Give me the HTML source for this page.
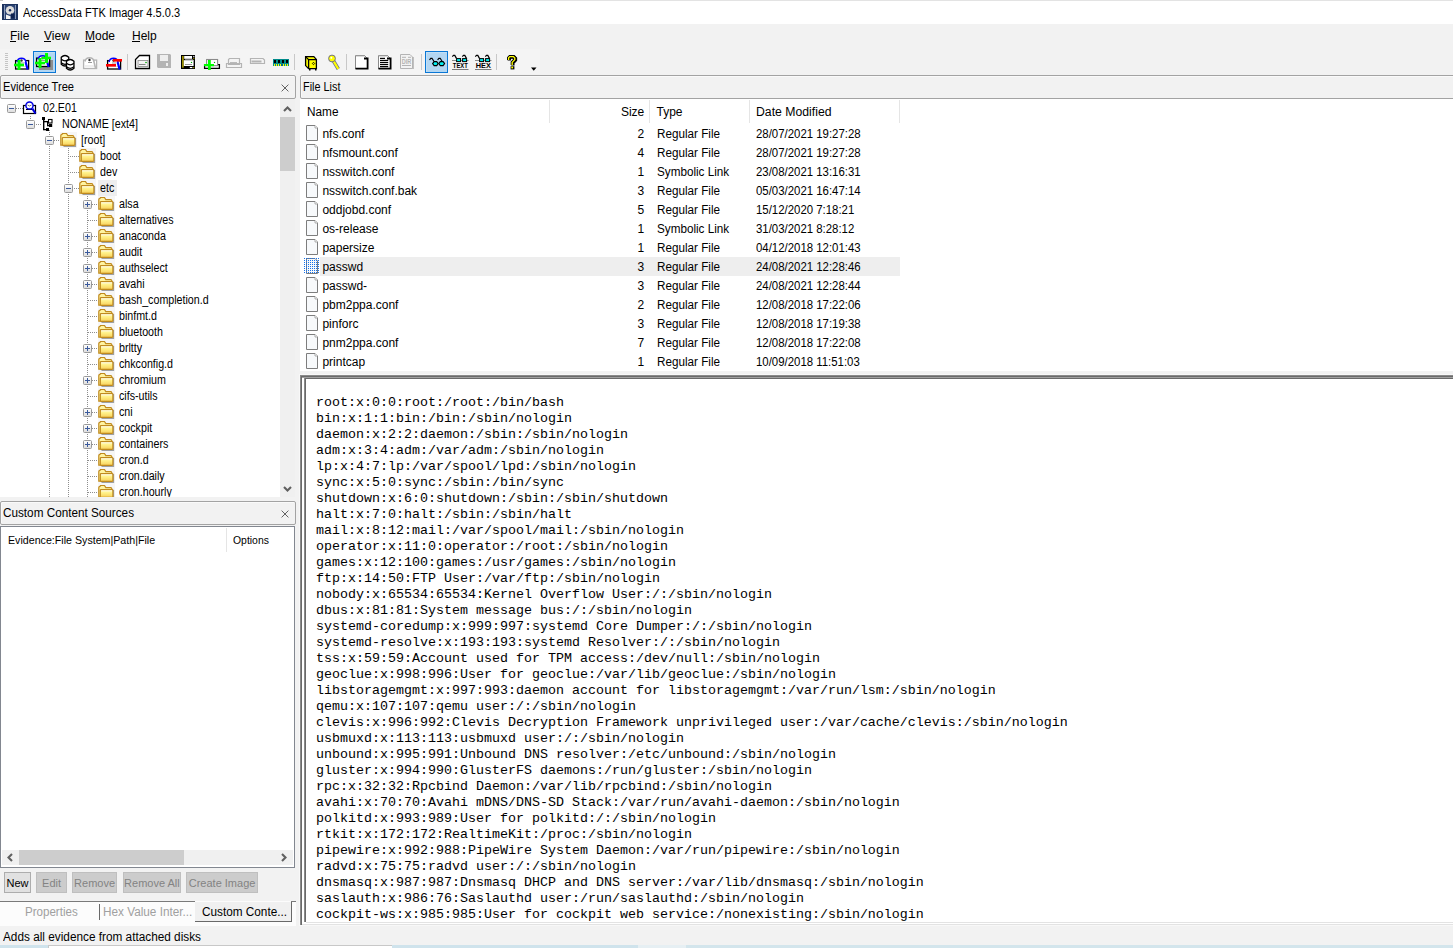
<!DOCTYPE html><html><head><meta charset="utf-8"><style>
*{box-sizing:border-box;margin:0;padding:0}
html,body{width:1453px;height:948px;overflow:hidden;background:#f2f2f2;font-family:"Liberation Sans",sans-serif;color:#000}
.a{position:absolute}
.t{position:absolute;white-space:pre;line-height:1}
svg{position:absolute;overflow:visible}
</style></head><body><div class="a" style="left:0;top:0;width:1453px;height:24px;background:#fff"></div>
<div class="a" style="left:60px;top:0;width:1393px;height:1px;background:#e3e3e3"></div>
<div class="a" style="left:0;top:0;width:3px;height:1px;background:#c8c8c8"></div>
<svg style="left:2px;top:4px" width="16" height="16" viewBox="0 0 16 16">
<rect x="0" y="0" width="16" height="16" fill="#1d335f"/>
<rect x="2" y="1" width="1" height="14" fill="#8a9bbb"/><rect x="13" y="1" width="1" height="14" fill="#8a9bbb"/>
<rect x="3" y="1" width="10" height="14" fill="#2a4272"/>
<circle cx="8" cy="6.3" r="4.3" fill="#dcdcdc"/>
<circle cx="8" cy="6.3" r="1.2" fill="#14285a"/>
<path d="M4 10.5 L8.5 12.2 L8.5 15 L4 15Z" fill="#f4f4f4"/>
<rect x="9" y="9.5" width="3.5" height="5" fill="#0f2250"/>
</svg>
<div class="t" style="left:23.00px;top:7px;font-size:12px;transform:scaleX(0.9201);transform-origin:0 0;">AccessData FTK Imager 4.5.0.3</div>
<div class="t" style="left:10px;top:30px;font-size:12px">File</div>
<div class="a" style="left:10px;top:41px;width:6px;height:1px;background:#000"></div>
<div class="t" style="left:44px;top:30px;font-size:12px">View</div>
<div class="a" style="left:44px;top:41px;width:7px;height:1px;background:#000"></div>
<div class="t" style="left:85px;top:30px;font-size:12px">Mode</div>
<div class="a" style="left:85px;top:41px;width:10px;height:1px;background:#000"></div>
<div class="t" style="left:132px;top:30px;font-size:12px">Help</div>
<div class="a" style="left:132px;top:41px;width:8px;height:1px;background:#000"></div>
<div class="a" style="left:0;top:49px;width:540px;height:25px;background:#f4f4f4"></div>
<div class="a" style="left:5px;top:53px;width:3px;height:1px;background:#c4c4c4"></div>
<div class="a" style="left:5px;top:55px;width:3px;height:1px;background:#c4c4c4"></div>
<div class="a" style="left:5px;top:57px;width:3px;height:1px;background:#c4c4c4"></div>
<div class="a" style="left:5px;top:59px;width:3px;height:1px;background:#c4c4c4"></div>
<div class="a" style="left:5px;top:61px;width:3px;height:1px;background:#c4c4c4"></div>
<div class="a" style="left:5px;top:63px;width:3px;height:1px;background:#c4c4c4"></div>
<div class="a" style="left:5px;top:65px;width:3px;height:1px;background:#c4c4c4"></div>
<div class="a" style="left:5px;top:67px;width:3px;height:1px;background:#c4c4c4"></div>
<div class="a" style="left:5px;top:69px;width:3px;height:1px;background:#c4c4c4"></div>
<div class="a" style="left:33px;top:51px;width:23px;height:22px;background:#b3d6f2;border:1px solid #0a77d5;box-shadow:inset 1px 1px 0 #c2dff5"></div>
<div class="a" style="left:425px;top:51px;width:23px;height:22px;background:#b3d6f2;border:1px solid #0a77d5;box-shadow:inset 1px 1px 0 #c2dff5"></div>
<div class="a" style="left:127px;top:54px;width:1px;height:16px;background:#c8c8c8"></div>
<div class="a" style="left:294px;top:54px;width:1px;height:16px;background:#c8c8c8"></div>
<div class="a" style="left:346px;top:54px;width:1px;height:16px;background:#c8c8c8"></div>
<div class="a" style="left:421px;top:54px;width:1px;height:16px;background:#c8c8c8"></div>
<div class="a" style="left:496px;top:54px;width:1px;height:16px;background:#c8c8c8"></div>
<svg style="left:0;top:0" width="545" height="80" viewBox="0 0 545 80"><rect x="15.6" y="60.6" width="13" height="8.4" fill="#fff" stroke="#000" stroke-width="1.3"/><rect x="17" y="66" width="10" height="1" fill="#e0e0e0"/><path d="M17 62 A4.6 4.6 0 0 1 26 62" fill="#fff" stroke="#0000ff" stroke-width="1.5"/><circle cx="21.5" cy="60.5" r="1.2" fill="#333"/><path d="M20 63 L24 63" stroke="#999" stroke-width="1"/><path d="M25.6 62 L27.6 69.5" stroke="#0000ff" stroke-width="2.2"/><rect x="14" y="63.7" width="10" height="2.6" fill="#00ff00"/><rect x="17.5" y="60" width="3" height="10" fill="#00ff00"/><rect x="39" y="60" width="14" height="10" fill="#8e8e8e"/><rect x="36.6" y="58.1" width="13" height="8.4" fill="#fff" stroke="#000" stroke-width="1.3"/><rect x="38" y="63.5" width="10" height="1" fill="#e0e0e0"/><path d="M38 59.5 A4.6 4.6 0 0 1 47 59.5" fill="#fff" stroke="#0000ff" stroke-width="1.5"/><circle cx="42.5" cy="58.0" r="1.2" fill="#333"/><path d="M41 60.5 L45 60.5" stroke="#999" stroke-width="1"/><path d="M46.6 59.5 L48.6 67.0" stroke="#0000ff" stroke-width="2.2"/><rect x="35" y="61.7" width="10" height="2.6" fill="#00ff00"/><rect x="38.5" y="58" width="3" height="10" fill="#00ff00"/><rect x="42" y="56.7" width="9" height="2.6" fill="#00ff00"/><rect x="45.0" y="53" width="3" height="10" fill="#00ff00"/><path d="M61.25 57.3 L61.25 64.2 Q65 67.8 68.75 64.2 L68.75 57.3 Q65 53.7 61.25 57.3Z" fill="#fff" stroke="#000" stroke-width="1.3"/><path d="M61.25 59.3 Q65 62.3 68.75 59.3" fill="none" stroke="#000" stroke-width="1.2"/><path d="M61.25 62.8 Q65 65.8 68.75 62.8" fill="none" stroke="#000" stroke-width="1.2"/><path d="M66.45 61.3 L66.45 68.2 Q70.2 71.8 73.95 68.2 L73.95 61.3 Q70.2 57.7 66.45 61.3Z" fill="#fff" stroke="#000" stroke-width="1.3"/><path d="M66.45 63.3 Q70.2 66.3 73.95 63.3" fill="none" stroke="#000" stroke-width="1.2"/><path d="M66.45 66.8 Q70.2 69.8 73.95 66.8" fill="none" stroke="#000" stroke-width="1.2"/><rect x="83.6" y="60.1" width="13" height="8.4" fill="#fff" stroke="#b4b4b4" stroke-width="1.3"/><rect x="85" y="65.5" width="10" height="1" fill="#e0e0e0"/><path d="M85 61.5 A4.6 4.6 0 0 1 94 61.5" fill="#fff" stroke="#b4b4b4" stroke-width="1.5"/><circle cx="89.5" cy="60.0" r="1.2" fill="#333"/><path d="M88 62.5 L92 62.5" stroke="#999" stroke-width="1"/><path d="M93.5 60 L95.5 68" stroke="#b4b4b4" stroke-width="1.6"/><rect x="107.6" y="60.6" width="13" height="8.4" fill="#fff" stroke="#000" stroke-width="1.3"/><rect x="109" y="66" width="10" height="1" fill="#e0e0e0"/><path d="M109 62 A4.6 4.6 0 0 1 118 62" fill="#fff" stroke="#0000ff" stroke-width="1.5"/><circle cx="113.5" cy="60.5" r="1.2" fill="#333"/><path d="M112 63 L116 63" stroke="#999" stroke-width="1"/><path d="M117.6 62 L119.6 69.5" stroke="#0000ff" stroke-width="2.2"/><rect x="113" y="59" width="9" height="2.6" fill="#ff0000"/><rect x="106" y="64" width="10" height="2.6" fill="#ff0000"/><path d="M139.5 55.5 L149.5 55.5 L149.5 68.5 L135.5 68.5 L135.5 59.5Z" fill="#fff" stroke="#000" stroke-width="1.3"/><rect x="138" y="60.5" width="10" height="6" fill="#f4f4f4" stroke="#888" stroke-width="0.8"/><rect x="139" y="64" width="6.5" height="0.9" fill="#777"/><circle cx="146" cy="62.5" r="0.8" fill="#0a0"/><path d="M157 54 L170 54 L171 55 L171 68 L158 68 L157 67Z" fill="#b4b4b4"/><rect x="160" y="55" width="8" height="6" fill="#eee"/><rect x="166" y="63" width="2" height="3" fill="#eee"/><rect x="181" y="55" width="14" height="14" fill="#000"/><rect x="182" y="56" width="1.8" height="11.7" fill="#9a8f00"/><rect x="184.2" y="56" width="7.8" height="2.8" fill="#fff"/><rect x="185" y="59.2" width="8" height="0.8" fill="#8a8a8a"/><rect x="193.2" y="56.1" width="1.2" height="1.2" fill="#fff"/><rect x="193.2" y="58" width="1.2" height="1.2" fill="#9a8f00"/><rect x="183.8" y="60.2" width="10" height="5.8" fill="#fff"/><rect x="193" y="60.5" width="1" height="5.5" fill="#9a9a9a"/><rect x="185" y="64" width="7" height="0.9" fill="#8a8a8a"/><circle cx="191.5" cy="62.4" r="0.7" fill="#0a0"/><rect x="189.8" y="67" width="2.6" height="1.1" fill="#fff"/><rect x="193.1" y="67" width="1.2" height="1.2" fill="#9a8f00"/><path d="M204.6 64.6 H219.4 V68.4 H204.6Z" fill="#fff" stroke="#000" stroke-width="1.3"/><rect x="206.6" y="59.5" width="11" height="6.2" fill="#fff" stroke="#8a8a8a" stroke-width="1.1"/><circle cx="214.5" cy="62.4" r="0.7" fill="#0a0"/><rect x="204" y="64" width="10" height="2.2" fill="#00ff00"/><rect x="208" y="60" width="2.8" height="10" fill="#00ff00"/><path d="M229.5 58.5 L239.5 58.5 L239.5 64.5 L228.5 64.5 L228.5 59.5Z" fill="none" stroke="#b4b4b4" stroke-width="1.2"/><path d="M226.5 63.5 L241.5 63.5 L241.5 67.5 L226.5 67.5Z" fill="none" stroke="#b4b4b4" stroke-width="1.2"/><rect x="230" y="62" width="7" height="0.9" fill="#b4b4b4"/><path d="M250.5 58.5 L263 58.5 L264.5 60 L264.5 63.5 L250.5 63.5Z" fill="none" stroke="#b4b4b4" stroke-width="1.2"/><rect x="251.5" y="60.5" width="10" height="2" fill="#b4b4b4"/><rect x="273" y="59" width="16" height="7" fill="#008a8a"/><rect x="274" y="60" width="2" height="3" fill="#000"/><rect x="278" y="60" width="2" height="3" fill="#000"/><rect x="282" y="60" width="2" height="3" fill="#000"/><rect x="286" y="60" width="2" height="3" fill="#000"/><rect x="274" y="64" width="1" height="2" fill="#ffff00"/><rect x="276" y="64" width="1" height="2" fill="#ffff00"/><rect x="278" y="64" width="1" height="2" fill="#ffff00"/><rect x="280" y="64" width="1" height="2" fill="#ffff00"/><rect x="283" y="64" width="1" height="2" fill="#ffff00"/><rect x="285" y="64" width="1" height="2" fill="#ffff00"/><rect x="287" y="64" width="1" height="2" fill="#ffff00"/><rect x="281" y="64" width="2" height="2" fill="#006a8a"/><path d="M305.6 56.6 H313.8 L316.4 59.4 V68.6 H308.6 L305.6 65.6Z" fill="#ffff00" stroke="#000" stroke-width="1.3"/><path d="M305.6 56.6 L308.6 59.6 H316.4 M308.6 59.6 V68.6" fill="none" stroke="#000" stroke-width="1.3"/><rect x="309" y="69" width="1.5" height="1.5" fill="#000"/><rect x="315" y="69" width="1.5" height="1.5" fill="#000"/><path d="M313.5 62.3 L314.7 63.5 L313.5 64.7 L312.3 63.5Z" fill="none" stroke="#000" stroke-width="0.9"/><path d="M333.5 61 L338.3 69" stroke="#6f6f8a" stroke-width="3.6"/><path d="M333.5 61 L338.3 69" stroke="#ffff00" stroke-width="2.2"/><circle cx="332" cy="58.5" r="3.4" fill="#ffff00" stroke="#6f6f8a" stroke-width="1"/><circle cx="331.3" cy="57.8" r="1" fill="#fff"/><path d="M355.5 69 V55.8 H364.8 L367.5 58.5" fill="#fff" stroke="#8a8a8a" stroke-width="1"/><rect x="355.5" y="55.8" width="12" height="13" fill="#fff"/><path d="M355.5 69 V55.8 H364.8 L367.5 58.5" fill="none" stroke="#8a8a8a" stroke-width="1"/><path d="M364 58.5 H367.6 V68.6 H355.5" fill="none" stroke="#000" stroke-width="1.8"/><path d="M378.5 69 V55.8 H387.8 L390.5 58.5" fill="#fff" stroke="#8a8a8a" stroke-width="1"/><rect x="378.5" y="55.8" width="12" height="13" fill="#fff"/><path d="M378.5 69 V55.8 H387.8 L390.5 58.5" fill="none" stroke="#8a8a8a" stroke-width="1"/><path d="M387 58.5 H390.6 V68.6 H378.5" fill="none" stroke="#000" stroke-width="1.8"/><rect x="380" y="57.8" width="5" height="1.2" fill="#000"/><rect x="380" y="59.849999999999994" width="8.2" height="1.2" fill="#000"/><rect x="380" y="61.9" width="8.2" height="1.2" fill="#000"/><rect x="380" y="63.949999999999996" width="8.2" height="1.2" fill="#000"/><rect x="380" y="66.0" width="8.2" height="1.2" fill="#000"/><path d="M400.5 68.5 V54.5 H410 L412.5 57 V68.5Z" fill="#f3f3f3" stroke="#b4b4b4" stroke-width="1"/><rect x="412.5" y="57" width="1.3" height="12" fill="#b4b4b4"/><rect x="402" y="56.8" width="4" height="1" fill="#b4b4b4"/><rect x="408" y="56.8" width="3" height="1" fill="#b4b4b4"/><rect x="402" y="65" width="9" height="1" fill="#b4b4b4"/><text x="401.8" y="63.8" font-family="Liberation Sans" font-size="6.3" font-weight="bold" textLength="9.6" lengthAdjust="spacingAndGlyphs" fill="#b4b4b4">DIR</text><path d="M429.5 59.8 L430.8 58.3 H432 L434 61.5 M437.6 59.8 L438.9 58.3 H440.2 L442.2 61.5" fill="none" stroke="#000" stroke-width="1.2"/><path d="M432.6 63.599999999999994 L434.1 61.6 H436.7 L438.2 63.599999999999994 L436.7 65.6 H434.1Z" fill="#00f0f0" stroke="#000" stroke-width="1.1"/><path d="M438.8 63.599999999999994 L440.3 61.6 H443.1 L444.6 63.599999999999994 L443.1 65.6 H440.3Z" fill="#00f0f0" stroke="#000" stroke-width="1.1"/><path d="M452.3 56.6 L453.5 55.4 H454.8 L456.6 58.6 M462.3 56.6 L463.5 55.4 H464.8 L466.6 58.6" fill="none" stroke="#000" stroke-width="1.2"/><rect x="452" y="60" width="16.5" height="1" fill="#8a8a8a"/><rect x="456.6" y="58.6" width="4" height="3" fill="#00f0f0" stroke="#000" stroke-width="1"/><rect x="462.6" y="58.6" width="4" height="3" fill="#00f0f0" stroke="#000" stroke-width="1"/><text x="452.8" y="67.9" font-family="Liberation Sans" font-size="6.4" font-weight="bold" textLength="15" lengthAdjust="spacingAndGlyphs" fill="#000">TEXT</text><rect x="452" y="69" width="16.5" height="1" fill="#7a7a7a"/><path d="M475.3 56.6 L476.5 55.4 H477.8 L479.6 58.6 M485.3 56.6 L486.5 55.4 H487.8 L489.6 58.6" fill="none" stroke="#000" stroke-width="1.2"/><rect x="475" y="60" width="16.5" height="1" fill="#8a8a8a"/><rect x="479.6" y="58.6" width="4" height="3" fill="#00f0f0" stroke="#000" stroke-width="1"/><rect x="485.6" y="58.6" width="4" height="3" fill="#00f0f0" stroke="#000" stroke-width="1"/><text x="475.8" y="67.9" font-family="Liberation Sans" font-size="6.4" font-weight="bold" textLength="15" lengthAdjust="spacingAndGlyphs" fill="#000">HEX</text><rect x="475" y="69" width="16.5" height="1" fill="#7a7a7a"/><path d="M508.6 60 V57.8 L509.8 56.6 H513.4 L514.8 58 V59.6 L512.2 62.4 V65" transform="translate(0.7,0.4)" fill="none" stroke="#000" stroke-width="3.3"/><path d="M508.6 60 V57.8 L509.8 56.6 H513.4 L514.8 58 V59.6 L512.2 62.4 V65" fill="none" stroke="#000" stroke-width="3.1"/><path d="M508.6 60 V57.8 L509.8 56.6 H513.4 L514.8 58 V59.6 L512.2 62.4 V65" fill="none" stroke="#ffff00" stroke-width="1.3"/><rect x="510.6" y="66.2" width="3.8" height="3.2" fill="#000"/><rect x="511.3" y="66.6" width="1.8" height="1.8" fill="#ffff00"/><path d="M531 67.5 L536.5 67.5 L533.75 70.8Z" fill="#000"/></svg>
<div class="a" style="left:0px;top:75px;width:296px;height:24px;background:#f2f2f2;border:1px solid #a3a3a3;border-radius:2px;box-shadow:inset 1px 1px 0 #fafafa"></div>
<div class="t" style="left:2.50px;top:81px;font-size:12px;transform:scaleX(0.9255);transform-origin:0 0;">Evidence Tree</div>
<svg style="left:281px;top:84px" width="8" height="8" viewBox="0 0 8 8"><path d="M0.6 0.6 L7.4 7.4 M7.4 0.6 L0.6 7.4" stroke="#5a5a5a" stroke-width="0.95"/></svg>
<div class="a" style="left:0px;top:99px;width:280px;height:398px;background:#fff"></div>
<div class="a" style="left:280px;top:99px;width:15px;height:398px;background:#f0f0f0"></div>
<div class="a" style="left:280px;top:117px;width:15px;height:54px;background:#cdcdcd"></div>
<svg style="left:283px;top:106px" width="9" height="6" viewBox="0 0 9 6"><path d="M1 5 L4.5 1.5 L8 5" fill="none" stroke="#606060" stroke-width="2.1"/></svg>
<svg style="left:283px;top:486px" width="9" height="6" viewBox="0 0 9 6"><path d="M1 1 L4.5 4.5 L8 1" fill="none" stroke="#606060" stroke-width="2.1"/></svg>
<svg style="left:0;top:0" width="300" height="500" viewBox="0 0 300 500"><defs><linearGradient id="fg" x1="0" y1="0" x2="0" y2="1"><stop offset="0" stop-color="#fffad0"/><stop offset="0.4" stop-color="#fff28a"/><stop offset="1" stop-color="#f8cf5a"/></linearGradient><linearGradient id="eg" x1="0" y1="0" x2="0" y2="1"><stop offset="0" stop-color="#fff"/><stop offset="1" stop-color="#dcdcdc"/></linearGradient><clipPath id="tc"><rect x="0" y="99" width="280" height="398"/></clipPath></defs><g clip-path="url(#tc)"><pattern id="pv" width="1" height="2" patternUnits="userSpaceOnUse"><rect width="1" height="1" fill="#8e8e8e"/></pattern><pattern id="ph" width="2" height="1" patternUnits="userSpaceOnUse"><rect width="1" height="1" fill="#8e8e8e"/></pattern><rect x="30" y="115" width="1" height="5" fill="url(#pv)"/><rect x="49" y="130" width="1" height="370" fill="url(#pv)"/><rect x="68" y="148" width="1" height="352" fill="url(#pv)"/><rect x="87" y="196" width="1" height="304" fill="url(#pv)"/><rect x="16" y="108" width="7" height="1" fill="url(#ph)"/><rect x="7.5" y="104.5" width="8" height="8" rx="1" fill="url(#eg)" stroke="#999" stroke-width="1"/><rect x="9" y="108" width="5" height="1" fill="#3b5a9c"/><rect x="23.5" y="105.5" width="12" height="8" fill="#fff" stroke="#000" stroke-width="1.2"/><path d="M26 109.5 L33 109.5" stroke="#000" stroke-width="1"/><circle cx="29.5" cy="105.5" r="3.6" fill="#fff" stroke="#0000e0" stroke-width="1.5"/><path d="M27.5 105 Q29.5 107 31.5 105" fill="none" stroke="#555" stroke-width="0.8"/><path d="M32.3 108.5 L35.5 113.5" stroke="#0000e0" stroke-width="2.2"/><rect x="35" y="124" width="6" height="1" fill="url(#ph)"/><rect x="26.5" y="120.5" width="8" height="8" rx="1" fill="url(#eg)" stroke="#999" stroke-width="1"/><rect x="28" y="124" width="5" height="1" fill="#3b5a9c"/><rect x="42" y="117" width="3" height="3" fill="#000"/><rect x="43" y="119" width="1.4" height="11" fill="#000"/><rect x="43" y="121" width="5" height="1.3" fill="#000"/><rect x="47" y="121" width="1.3" height="5" fill="#000"/><rect x="47" y="125" width="2.5" height="1.3" fill="#000"/><rect x="48.5" y="119.5" width="3.5" height="3.5" fill="#fff" stroke="#000" stroke-width="1.1"/><rect x="49" y="124" width="3.2" height="3" fill="#000"/><rect x="43" y="129" width="3" height="1.3" fill="#000"/><rect x="46" y="128" width="3" height="3" fill="#000"/><rect x="54" y="140" width="6" height="1" fill="url(#ph)"/><rect x="45.5" y="136.5" width="8" height="8" rx="1" fill="url(#eg)" stroke="#999" stroke-width="1"/><rect x="47" y="140" width="5" height="1" fill="#3b5a9c"/><rect x="60" y="132" width="17" height="16" fill="#f6f6f6"/><path d="M63.5 146.5 H75.5 V138" fill="none" stroke="#55595f" stroke-opacity="0.55" stroke-width="1.2"/><path d="M60.8 145.2 V135.6 Q60.8 134.4 62 134.4 L62.5 133.5 H66.5 L67.8 135.6 H72.6 Q73.8 135.6 73.8 136.8 V145.2Z" fill="#fff3a0" stroke="#c08a1e" stroke-width="1.2"/><rect x="62.3" y="137.6" width="12.6" height="7.8" rx="0.8" fill="url(#fg)" stroke="#c08a1e" stroke-width="1.2"/><path d="M63.2 138.8 H74" stroke="#fffbe6" stroke-width="0.9"/><rect x="69" y="156" width="10" height="1" fill="url(#ph)"/><rect x="79" y="148" width="17" height="16" fill="#f6f6f6"/><path d="M82.5 162.5 H94.5 V154" fill="none" stroke="#55595f" stroke-opacity="0.55" stroke-width="1.2"/><path d="M79.8 161.2 V151.6 Q79.8 150.4 81 150.4 L81.5 149.5 H85.5 L86.8 151.6 H91.6 Q92.8 151.6 92.8 152.8 V161.2Z" fill="#fff3a0" stroke="#c08a1e" stroke-width="1.2"/><rect x="81.3" y="153.6" width="12.6" height="7.8" rx="0.8" fill="url(#fg)" stroke="#c08a1e" stroke-width="1.2"/><path d="M82.2 154.8 H93" stroke="#fffbe6" stroke-width="0.9"/><rect x="69" y="172" width="10" height="1" fill="url(#ph)"/><rect x="79" y="164" width="17" height="16" fill="#f6f6f6"/><path d="M82.5 178.5 H94.5 V170" fill="none" stroke="#55595f" stroke-opacity="0.55" stroke-width="1.2"/><path d="M79.8 177.2 V167.6 Q79.8 166.4 81 166.4 L81.5 165.5 H85.5 L86.8 167.6 H91.6 Q92.8 167.6 92.8 168.8 V177.2Z" fill="#fff3a0" stroke="#c08a1e" stroke-width="1.2"/><rect x="81.3" y="169.6" width="12.6" height="7.8" rx="0.8" fill="url(#fg)" stroke="#c08a1e" stroke-width="1.2"/><path d="M82.2 170.8 H93" stroke="#fffbe6" stroke-width="0.9"/><rect x="73" y="188" width="6" height="1" fill="url(#ph)"/><rect x="64.5" y="184.5" width="8" height="8" rx="1" fill="url(#eg)" stroke="#999" stroke-width="1"/><rect x="66" y="188" width="5" height="1" fill="#3b5a9c"/><rect x="79" y="180" width="17" height="16" fill="#f6f6f6"/><path d="M82.5 194.5 H94.5 V186" fill="none" stroke="#55595f" stroke-opacity="0.55" stroke-width="1.2"/><path d="M79.8 193.2 V183.6 Q79.8 182.4 81 182.4 L81.5 181.5 H85.5 L86.8 183.6 H91.6 Q92.8 183.6 92.8 184.8 V193.2Z" fill="#fff3a0" stroke="#c08a1e" stroke-width="1.2"/><rect x="81.3" y="185.6" width="12.6" height="7.8" rx="0.8" fill="url(#fg)" stroke="#c08a1e" stroke-width="1.2"/><path d="M82.2 186.8 H93" stroke="#fffbe6" stroke-width="0.9"/><rect x="92" y="204" width="6" height="1" fill="url(#ph)"/><rect x="83.5" y="200.5" width="8" height="8" rx="1" fill="url(#eg)" stroke="#999" stroke-width="1"/><rect x="85" y="204" width="5" height="1" fill="#3b5a9c"/><rect x="87" y="202" width="1" height="5" fill="#3b5a9c"/><rect x="98" y="196" width="17" height="16" fill="#f6f6f6"/><path d="M101.5 210.5 H113.5 V202" fill="none" stroke="#55595f" stroke-opacity="0.55" stroke-width="1.2"/><path d="M98.8 209.2 V199.6 Q98.8 198.4 100 198.4 L100.5 197.5 H104.5 L105.8 199.6 H110.6 Q111.8 199.6 111.8 200.8 V209.2Z" fill="#fff3a0" stroke="#c08a1e" stroke-width="1.2"/><rect x="100.3" y="201.6" width="12.6" height="7.8" rx="0.8" fill="url(#fg)" stroke="#c08a1e" stroke-width="1.2"/><path d="M101.2 202.8 H112" stroke="#fffbe6" stroke-width="0.9"/><rect x="88" y="220" width="10" height="1" fill="url(#ph)"/><rect x="98" y="212" width="17" height="16" fill="#f6f6f6"/><path d="M101.5 226.5 H113.5 V218" fill="none" stroke="#55595f" stroke-opacity="0.55" stroke-width="1.2"/><path d="M98.8 225.2 V215.6 Q98.8 214.4 100 214.4 L100.5 213.5 H104.5 L105.8 215.6 H110.6 Q111.8 215.6 111.8 216.8 V225.2Z" fill="#fff3a0" stroke="#c08a1e" stroke-width="1.2"/><rect x="100.3" y="217.6" width="12.6" height="7.8" rx="0.8" fill="url(#fg)" stroke="#c08a1e" stroke-width="1.2"/><path d="M101.2 218.8 H112" stroke="#fffbe6" stroke-width="0.9"/><rect x="92" y="236" width="6" height="1" fill="url(#ph)"/><rect x="83.5" y="232.5" width="8" height="8" rx="1" fill="url(#eg)" stroke="#999" stroke-width="1"/><rect x="85" y="236" width="5" height="1" fill="#3b5a9c"/><rect x="87" y="234" width="1" height="5" fill="#3b5a9c"/><rect x="98" y="228" width="17" height="16" fill="#f6f6f6"/><path d="M101.5 242.5 H113.5 V234" fill="none" stroke="#55595f" stroke-opacity="0.55" stroke-width="1.2"/><path d="M98.8 241.2 V231.6 Q98.8 230.4 100 230.4 L100.5 229.5 H104.5 L105.8 231.6 H110.6 Q111.8 231.6 111.8 232.8 V241.2Z" fill="#fff3a0" stroke="#c08a1e" stroke-width="1.2"/><rect x="100.3" y="233.6" width="12.6" height="7.8" rx="0.8" fill="url(#fg)" stroke="#c08a1e" stroke-width="1.2"/><path d="M101.2 234.8 H112" stroke="#fffbe6" stroke-width="0.9"/><rect x="92" y="252" width="6" height="1" fill="url(#ph)"/><rect x="83.5" y="248.5" width="8" height="8" rx="1" fill="url(#eg)" stroke="#999" stroke-width="1"/><rect x="85" y="252" width="5" height="1" fill="#3b5a9c"/><rect x="87" y="250" width="1" height="5" fill="#3b5a9c"/><rect x="98" y="244" width="17" height="16" fill="#f6f6f6"/><path d="M101.5 258.5 H113.5 V250" fill="none" stroke="#55595f" stroke-opacity="0.55" stroke-width="1.2"/><path d="M98.8 257.2 V247.6 Q98.8 246.4 100 246.4 L100.5 245.5 H104.5 L105.8 247.6 H110.6 Q111.8 247.6 111.8 248.8 V257.2Z" fill="#fff3a0" stroke="#c08a1e" stroke-width="1.2"/><rect x="100.3" y="249.6" width="12.6" height="7.8" rx="0.8" fill="url(#fg)" stroke="#c08a1e" stroke-width="1.2"/><path d="M101.2 250.8 H112" stroke="#fffbe6" stroke-width="0.9"/><rect x="92" y="268" width="6" height="1" fill="url(#ph)"/><rect x="83.5" y="264.5" width="8" height="8" rx="1" fill="url(#eg)" stroke="#999" stroke-width="1"/><rect x="85" y="268" width="5" height="1" fill="#3b5a9c"/><rect x="87" y="266" width="1" height="5" fill="#3b5a9c"/><rect x="98" y="260" width="17" height="16" fill="#f6f6f6"/><path d="M101.5 274.5 H113.5 V266" fill="none" stroke="#55595f" stroke-opacity="0.55" stroke-width="1.2"/><path d="M98.8 273.2 V263.6 Q98.8 262.4 100 262.4 L100.5 261.5 H104.5 L105.8 263.6 H110.6 Q111.8 263.6 111.8 264.8 V273.2Z" fill="#fff3a0" stroke="#c08a1e" stroke-width="1.2"/><rect x="100.3" y="265.6" width="12.6" height="7.8" rx="0.8" fill="url(#fg)" stroke="#c08a1e" stroke-width="1.2"/><path d="M101.2 266.8 H112" stroke="#fffbe6" stroke-width="0.9"/><rect x="92" y="284" width="6" height="1" fill="url(#ph)"/><rect x="83.5" y="280.5" width="8" height="8" rx="1" fill="url(#eg)" stroke="#999" stroke-width="1"/><rect x="85" y="284" width="5" height="1" fill="#3b5a9c"/><rect x="87" y="282" width="1" height="5" fill="#3b5a9c"/><rect x="98" y="276" width="17" height="16" fill="#f6f6f6"/><path d="M101.5 290.5 H113.5 V282" fill="none" stroke="#55595f" stroke-opacity="0.55" stroke-width="1.2"/><path d="M98.8 289.2 V279.6 Q98.8 278.4 100 278.4 L100.5 277.5 H104.5 L105.8 279.6 H110.6 Q111.8 279.6 111.8 280.8 V289.2Z" fill="#fff3a0" stroke="#c08a1e" stroke-width="1.2"/><rect x="100.3" y="281.6" width="12.6" height="7.8" rx="0.8" fill="url(#fg)" stroke="#c08a1e" stroke-width="1.2"/><path d="M101.2 282.8 H112" stroke="#fffbe6" stroke-width="0.9"/><rect x="88" y="300" width="10" height="1" fill="url(#ph)"/><rect x="98" y="292" width="17" height="16" fill="#f6f6f6"/><path d="M101.5 306.5 H113.5 V298" fill="none" stroke="#55595f" stroke-opacity="0.55" stroke-width="1.2"/><path d="M98.8 305.2 V295.6 Q98.8 294.4 100 294.4 L100.5 293.5 H104.5 L105.8 295.6 H110.6 Q111.8 295.6 111.8 296.8 V305.2Z" fill="#fff3a0" stroke="#c08a1e" stroke-width="1.2"/><rect x="100.3" y="297.6" width="12.6" height="7.8" rx="0.8" fill="url(#fg)" stroke="#c08a1e" stroke-width="1.2"/><path d="M101.2 298.8 H112" stroke="#fffbe6" stroke-width="0.9"/><rect x="88" y="316" width="10" height="1" fill="url(#ph)"/><rect x="98" y="308" width="17" height="16" fill="#f6f6f6"/><path d="M101.5 322.5 H113.5 V314" fill="none" stroke="#55595f" stroke-opacity="0.55" stroke-width="1.2"/><path d="M98.8 321.2 V311.6 Q98.8 310.4 100 310.4 L100.5 309.5 H104.5 L105.8 311.6 H110.6 Q111.8 311.6 111.8 312.8 V321.2Z" fill="#fff3a0" stroke="#c08a1e" stroke-width="1.2"/><rect x="100.3" y="313.6" width="12.6" height="7.8" rx="0.8" fill="url(#fg)" stroke="#c08a1e" stroke-width="1.2"/><path d="M101.2 314.8 H112" stroke="#fffbe6" stroke-width="0.9"/><rect x="88" y="332" width="10" height="1" fill="url(#ph)"/><rect x="98" y="324" width="17" height="16" fill="#f6f6f6"/><path d="M101.5 338.5 H113.5 V330" fill="none" stroke="#55595f" stroke-opacity="0.55" stroke-width="1.2"/><path d="M98.8 337.2 V327.6 Q98.8 326.4 100 326.4 L100.5 325.5 H104.5 L105.8 327.6 H110.6 Q111.8 327.6 111.8 328.8 V337.2Z" fill="#fff3a0" stroke="#c08a1e" stroke-width="1.2"/><rect x="100.3" y="329.6" width="12.6" height="7.8" rx="0.8" fill="url(#fg)" stroke="#c08a1e" stroke-width="1.2"/><path d="M101.2 330.8 H112" stroke="#fffbe6" stroke-width="0.9"/><rect x="92" y="348" width="6" height="1" fill="url(#ph)"/><rect x="83.5" y="344.5" width="8" height="8" rx="1" fill="url(#eg)" stroke="#999" stroke-width="1"/><rect x="85" y="348" width="5" height="1" fill="#3b5a9c"/><rect x="87" y="346" width="1" height="5" fill="#3b5a9c"/><rect x="98" y="340" width="17" height="16" fill="#f6f6f6"/><path d="M101.5 354.5 H113.5 V346" fill="none" stroke="#55595f" stroke-opacity="0.55" stroke-width="1.2"/><path d="M98.8 353.2 V343.6 Q98.8 342.4 100 342.4 L100.5 341.5 H104.5 L105.8 343.6 H110.6 Q111.8 343.6 111.8 344.8 V353.2Z" fill="#fff3a0" stroke="#c08a1e" stroke-width="1.2"/><rect x="100.3" y="345.6" width="12.6" height="7.8" rx="0.8" fill="url(#fg)" stroke="#c08a1e" stroke-width="1.2"/><path d="M101.2 346.8 H112" stroke="#fffbe6" stroke-width="0.9"/><rect x="88" y="364" width="10" height="1" fill="url(#ph)"/><rect x="98" y="356" width="17" height="16" fill="#f6f6f6"/><path d="M101.5 370.5 H113.5 V362" fill="none" stroke="#55595f" stroke-opacity="0.55" stroke-width="1.2"/><path d="M98.8 369.2 V359.6 Q98.8 358.4 100 358.4 L100.5 357.5 H104.5 L105.8 359.6 H110.6 Q111.8 359.6 111.8 360.8 V369.2Z" fill="#fff3a0" stroke="#c08a1e" stroke-width="1.2"/><rect x="100.3" y="361.6" width="12.6" height="7.8" rx="0.8" fill="url(#fg)" stroke="#c08a1e" stroke-width="1.2"/><path d="M101.2 362.8 H112" stroke="#fffbe6" stroke-width="0.9"/><rect x="92" y="380" width="6" height="1" fill="url(#ph)"/><rect x="83.5" y="376.5" width="8" height="8" rx="1" fill="url(#eg)" stroke="#999" stroke-width="1"/><rect x="85" y="380" width="5" height="1" fill="#3b5a9c"/><rect x="87" y="378" width="1" height="5" fill="#3b5a9c"/><rect x="98" y="372" width="17" height="16" fill="#f6f6f6"/><path d="M101.5 386.5 H113.5 V378" fill="none" stroke="#55595f" stroke-opacity="0.55" stroke-width="1.2"/><path d="M98.8 385.2 V375.6 Q98.8 374.4 100 374.4 L100.5 373.5 H104.5 L105.8 375.6 H110.6 Q111.8 375.6 111.8 376.8 V385.2Z" fill="#fff3a0" stroke="#c08a1e" stroke-width="1.2"/><rect x="100.3" y="377.6" width="12.6" height="7.8" rx="0.8" fill="url(#fg)" stroke="#c08a1e" stroke-width="1.2"/><path d="M101.2 378.8 H112" stroke="#fffbe6" stroke-width="0.9"/><rect x="88" y="396" width="10" height="1" fill="url(#ph)"/><rect x="98" y="388" width="17" height="16" fill="#f6f6f6"/><path d="M101.5 402.5 H113.5 V394" fill="none" stroke="#55595f" stroke-opacity="0.55" stroke-width="1.2"/><path d="M98.8 401.2 V391.6 Q98.8 390.4 100 390.4 L100.5 389.5 H104.5 L105.8 391.6 H110.6 Q111.8 391.6 111.8 392.8 V401.2Z" fill="#fff3a0" stroke="#c08a1e" stroke-width="1.2"/><rect x="100.3" y="393.6" width="12.6" height="7.8" rx="0.8" fill="url(#fg)" stroke="#c08a1e" stroke-width="1.2"/><path d="M101.2 394.8 H112" stroke="#fffbe6" stroke-width="0.9"/><rect x="92" y="412" width="6" height="1" fill="url(#ph)"/><rect x="83.5" y="408.5" width="8" height="8" rx="1" fill="url(#eg)" stroke="#999" stroke-width="1"/><rect x="85" y="412" width="5" height="1" fill="#3b5a9c"/><rect x="87" y="410" width="1" height="5" fill="#3b5a9c"/><rect x="98" y="404" width="17" height="16" fill="#f6f6f6"/><path d="M101.5 418.5 H113.5 V410" fill="none" stroke="#55595f" stroke-opacity="0.55" stroke-width="1.2"/><path d="M98.8 417.2 V407.6 Q98.8 406.4 100 406.4 L100.5 405.5 H104.5 L105.8 407.6 H110.6 Q111.8 407.6 111.8 408.8 V417.2Z" fill="#fff3a0" stroke="#c08a1e" stroke-width="1.2"/><rect x="100.3" y="409.6" width="12.6" height="7.8" rx="0.8" fill="url(#fg)" stroke="#c08a1e" stroke-width="1.2"/><path d="M101.2 410.8 H112" stroke="#fffbe6" stroke-width="0.9"/><rect x="92" y="428" width="6" height="1" fill="url(#ph)"/><rect x="83.5" y="424.5" width="8" height="8" rx="1" fill="url(#eg)" stroke="#999" stroke-width="1"/><rect x="85" y="428" width="5" height="1" fill="#3b5a9c"/><rect x="87" y="426" width="1" height="5" fill="#3b5a9c"/><rect x="98" y="420" width="17" height="16" fill="#f6f6f6"/><path d="M101.5 434.5 H113.5 V426" fill="none" stroke="#55595f" stroke-opacity="0.55" stroke-width="1.2"/><path d="M98.8 433.2 V423.6 Q98.8 422.4 100 422.4 L100.5 421.5 H104.5 L105.8 423.6 H110.6 Q111.8 423.6 111.8 424.8 V433.2Z" fill="#fff3a0" stroke="#c08a1e" stroke-width="1.2"/><rect x="100.3" y="425.6" width="12.6" height="7.8" rx="0.8" fill="url(#fg)" stroke="#c08a1e" stroke-width="1.2"/><path d="M101.2 426.8 H112" stroke="#fffbe6" stroke-width="0.9"/><rect x="92" y="444" width="6" height="1" fill="url(#ph)"/><rect x="83.5" y="440.5" width="8" height="8" rx="1" fill="url(#eg)" stroke="#999" stroke-width="1"/><rect x="85" y="444" width="5" height="1" fill="#3b5a9c"/><rect x="87" y="442" width="1" height="5" fill="#3b5a9c"/><rect x="98" y="436" width="17" height="16" fill="#f6f6f6"/><path d="M101.5 450.5 H113.5 V442" fill="none" stroke="#55595f" stroke-opacity="0.55" stroke-width="1.2"/><path d="M98.8 449.2 V439.6 Q98.8 438.4 100 438.4 L100.5 437.5 H104.5 L105.8 439.6 H110.6 Q111.8 439.6 111.8 440.8 V449.2Z" fill="#fff3a0" stroke="#c08a1e" stroke-width="1.2"/><rect x="100.3" y="441.6" width="12.6" height="7.8" rx="0.8" fill="url(#fg)" stroke="#c08a1e" stroke-width="1.2"/><path d="M101.2 442.8 H112" stroke="#fffbe6" stroke-width="0.9"/><rect x="88" y="460" width="10" height="1" fill="url(#ph)"/><rect x="98" y="452" width="17" height="16" fill="#f6f6f6"/><path d="M101.5 466.5 H113.5 V458" fill="none" stroke="#55595f" stroke-opacity="0.55" stroke-width="1.2"/><path d="M98.8 465.2 V455.6 Q98.8 454.4 100 454.4 L100.5 453.5 H104.5 L105.8 455.6 H110.6 Q111.8 455.6 111.8 456.8 V465.2Z" fill="#fff3a0" stroke="#c08a1e" stroke-width="1.2"/><rect x="100.3" y="457.6" width="12.6" height="7.8" rx="0.8" fill="url(#fg)" stroke="#c08a1e" stroke-width="1.2"/><path d="M101.2 458.8 H112" stroke="#fffbe6" stroke-width="0.9"/><rect x="88" y="476" width="10" height="1" fill="url(#ph)"/><rect x="98" y="468" width="17" height="16" fill="#f6f6f6"/><path d="M101.5 482.5 H113.5 V474" fill="none" stroke="#55595f" stroke-opacity="0.55" stroke-width="1.2"/><path d="M98.8 481.2 V471.6 Q98.8 470.4 100 470.4 L100.5 469.5 H104.5 L105.8 471.6 H110.6 Q111.8 471.6 111.8 472.8 V481.2Z" fill="#fff3a0" stroke="#c08a1e" stroke-width="1.2"/><rect x="100.3" y="473.6" width="12.6" height="7.8" rx="0.8" fill="url(#fg)" stroke="#c08a1e" stroke-width="1.2"/><path d="M101.2 474.8 H112" stroke="#fffbe6" stroke-width="0.9"/><rect x="88" y="492" width="10" height="1" fill="url(#ph)"/><rect x="98" y="484" width="17" height="16" fill="#f6f6f6"/><path d="M101.5 498.5 H113.5 V490" fill="none" stroke="#55595f" stroke-opacity="0.55" stroke-width="1.2"/><path d="M98.8 497.2 V487.6 Q98.8 486.4 100 486.4 L100.5 485.5 H104.5 L105.8 487.6 H110.6 Q111.8 487.6 111.8 488.8 V497.2Z" fill="#fff3a0" stroke="#c08a1e" stroke-width="1.2"/><rect x="100.3" y="489.6" width="12.6" height="7.8" rx="0.8" fill="url(#fg)" stroke="#c08a1e" stroke-width="1.2"/><path d="M101.2 490.8 H112" stroke="#fffbe6" stroke-width="0.9"/></g></svg>
<div class="a" style="left:98px;top:180px;width:19px;height:16px;background:#eeeeee"></div>
<div class="t" style="left:43.00px;top:102px;font-size:12px;transform:scaleX(0.8900);transform-origin:0 0;">02.E01</div>
<div class="t" style="left:62.00px;top:118px;font-size:12px;transform:scaleX(0.8900);transform-origin:0 0;">NONAME [ext4]</div>
<div class="t" style="left:81.00px;top:134px;font-size:12px;transform:scaleX(0.8900);transform-origin:0 0;">[root]</div>
<div class="t" style="left:99.50px;top:150px;font-size:12px;transform:scaleX(0.8900);transform-origin:0 0;">boot</div>
<div class="t" style="left:99.50px;top:166px;font-size:12px;transform:scaleX(0.8900);transform-origin:0 0;">dev</div>
<div class="t" style="left:99.50px;top:182px;font-size:12px;transform:scaleX(0.8900);transform-origin:0 0;">etc</div>
<div class="t" style="left:118.50px;top:198px;font-size:12px;transform:scaleX(0.8900);transform-origin:0 0;">alsa</div>
<div class="t" style="left:118.50px;top:214px;font-size:12px;transform:scaleX(0.8900);transform-origin:0 0;">alternatives</div>
<div class="t" style="left:118.50px;top:230px;font-size:12px;transform:scaleX(0.8900);transform-origin:0 0;">anaconda</div>
<div class="t" style="left:118.50px;top:246px;font-size:12px;transform:scaleX(0.8900);transform-origin:0 0;">audit</div>
<div class="t" style="left:118.50px;top:262px;font-size:12px;transform:scaleX(0.8900);transform-origin:0 0;">authselect</div>
<div class="t" style="left:118.50px;top:278px;font-size:12px;transform:scaleX(0.8900);transform-origin:0 0;">avahi</div>
<div class="t" style="left:118.50px;top:294px;font-size:12px;transform:scaleX(0.8900);transform-origin:0 0;">bash_completion.d</div>
<div class="t" style="left:118.50px;top:310px;font-size:12px;transform:scaleX(0.8900);transform-origin:0 0;">binfmt.d</div>
<div class="t" style="left:118.50px;top:326px;font-size:12px;transform:scaleX(0.8900);transform-origin:0 0;">bluetooth</div>
<div class="t" style="left:118.50px;top:342px;font-size:12px;transform:scaleX(0.8900);transform-origin:0 0;">brltty</div>
<div class="t" style="left:118.50px;top:358px;font-size:12px;transform:scaleX(0.8900);transform-origin:0 0;">chkconfig.d</div>
<div class="t" style="left:118.50px;top:374px;font-size:12px;transform:scaleX(0.8900);transform-origin:0 0;">chromium</div>
<div class="t" style="left:118.50px;top:390px;font-size:12px;transform:scaleX(0.8900);transform-origin:0 0;">cifs-utils</div>
<div class="t" style="left:118.50px;top:406px;font-size:12px;transform:scaleX(0.8900);transform-origin:0 0;">cni</div>
<div class="t" style="left:118.50px;top:422px;font-size:12px;transform:scaleX(0.8900);transform-origin:0 0;">cockpit</div>
<div class="t" style="left:118.50px;top:438px;font-size:12px;transform:scaleX(0.8900);transform-origin:0 0;">containers</div>
<div class="t" style="left:118.50px;top:454px;font-size:12px;transform:scaleX(0.8900);transform-origin:0 0;">cron.d</div>
<div class="t" style="left:118.50px;top:470px;font-size:12px;transform:scaleX(0.8900);transform-origin:0 0;">cron.daily</div>
<div class="t" style="left:118.50px;top:486px;font-size:12px;transform:scaleX(0.8900);transform-origin:0 0;">cron.hourly</div>
<div class="a" style="left:0px;top:497px;width:296px;height:4px;background:#f2f2f2"></div>
<div class="a" style="left:0px;top:501px;width:296px;height:24px;background:#f2f2f2;border:1px solid #a3a3a3;border-radius:2px;box-shadow:inset 1px 1px 0 #fafafa"></div>
<div class="t" style="left:2.50px;top:507px;font-size:12px;transform:scaleX(0.9772);transform-origin:0 0;">Custom Content Sources</div>
<svg style="left:281px;top:510px" width="8" height="8" viewBox="0 0 8 8"><path d="M0.6 0.6 L7.4 7.4 M7.4 0.6 L0.6 7.4" stroke="#5a5a5a" stroke-width="0.95"/></svg>
<div class="a" style="left:0px;top:526px;width:295px;height:342px;background:#fff;border:1px solid #828790"></div>
<div class="t" style="left:7.70px;top:535px;font-size:11px;transform:scaleX(0.9689);transform-origin:0 0;">Evidence:File System|Path|File</div>
<div class="a" style="left:226px;top:528px;width:1px;height:24px;background:#e5e5e5"></div>
<div class="t" style="left:232.90px;top:535px;font-size:11px;transform:scaleX(0.9477);transform-origin:0 0;">Options</div>
<div class="a" style="left:2px;top:850px;width:291px;height:15px;background:#f0f0f0"></div>
<div class="a" style="left:19px;top:850px;width:165px;height:15px;background:#cdcdcd"></div>
<svg style="left:7px;top:853px" width="6" height="9" viewBox="0 0 6 9"><path d="M5 1 L1.5 4.5 L5 8" fill="none" stroke="#606060" stroke-width="2.1"/></svg>
<svg style="left:281px;top:853px" width="6" height="9" viewBox="0 0 6 9"><path d="M1 1 L4.5 4.5 L1 8" fill="none" stroke="#606060" stroke-width="2.1"/></svg>
<div class="a" style="left:4px;top:872px;width:27px;height:21px;background:#e1e1e1;border:1px solid #adadad"></div>
<div class="t" style="left:6.47px;top:878px;font-size:11px;color:#000">New</div>
<div class="a" style="left:36px;top:872px;width:31px;height:21px;background:#cccccc;border:1px solid #bfbfbf"></div>
<div class="t" style="left:42.05px;top:878px;font-size:11px;color:#838383">Edit</div>
<div class="a" style="left:72px;top:872px;width:45px;height:21px;background:#cccccc;border:1px solid #bfbfbf"></div>
<div class="t" style="left:74.08px;top:878px;font-size:11px;color:#838383">Remove</div>
<div class="a" style="left:123px;top:872px;width:58px;height:21px;background:#cccccc;border:1px solid #bfbfbf"></div>
<div class="t" style="left:124.10px;top:878px;font-size:11px;color:#838383">Remove All</div>
<div class="a" style="left:186px;top:872px;width:72px;height:21px;background:#cccccc;border:1px solid #bfbfbf"></div>
<div class="t" style="left:188.74px;top:878px;font-size:11px;color:#838383">Create Image</div>
<div class="a" style="left:0px;top:901px;width:296px;height:25px;background:#fcfcfc"></div>
<div class="a" style="left:0px;top:901px;width:195px;height:1px;background:#7a7a7a"></div>
<div class="a" style="left:195px;top:902px;width:97px;height:20px;background:#f0f0f0;border-right:1px solid #696969;border-bottom:1px solid #696969"></div>
<div class="a" style="left:291px;top:901px;width:5px;height:1px;background:#7a7a7a"></div>
<div class="t" style="left:25.30px;top:906px;font-size:12px;transform:scaleX(0.9636);transform-origin:0 0;color:#a0a0a0">Properties</div>
<div class="a" style="left:99px;top:904px;width:1px;height:16px;background:#696969"></div>
<div class="t" style="left:103.00px;top:906px;font-size:12px;transform:scaleX(0.9799);transform-origin:0 0;color:#a0a0a0">Hex Value Inter...</div>
<div class="t" style="left:201.60px;top:906px;font-size:12px;transform:scaleX(0.9807);transform-origin:0 0;">Custom Conte...</div>
<div class="t" style="left:2.50px;top:931px;font-size:12px;transform:scaleX(0.9829);transform-origin:0 0;">Adds all evidence from attached disks</div>
<div class="a" style="left:300px;top:75px;width:1160px;height:24px;background:#f2f2f2;border:1px solid #a3a3a3;border-radius:2px;box-shadow:inset 1px 1px 0 #fafafa"></div>
<div class="t" style="left:302.80px;top:81px;font-size:12px;transform:scaleX(0.9046);transform-origin:0 0;">File List</div>
<div class="a" style="left:300px;top:99px;width:1153px;height:272px;background:#fff"></div>
<div class="a" style="left:549px;top:100px;width:1px;height:23px;background:#e5e5e5"></div>
<div class="a" style="left:649px;top:100px;width:1px;height:23px;background:#e5e5e5"></div>
<div class="a" style="left:749px;top:100px;width:1px;height:23px;background:#e5e5e5"></div>
<div class="a" style="left:899px;top:100px;width:1px;height:23px;background:#e5e5e5"></div>
<div class="t" style="left:306.50px;top:106px;font-size:12px;transform:scaleX(0.9834);transform-origin:0 0;">Name</div>
<div class="t" style="left:620.93px;top:106px;font-size:12px;">Size</div>
<div class="t" style="left:656.50px;top:106px;font-size:12px;">Type</div>
<div class="t" style="left:756.00px;top:106px;font-size:12px;transform:scaleX(1.0196);transform-origin:0 0;">Date Modified</div>
<div class="a" style="left:320px;top:257px;width:580px;height:19px;background:#eeeeee"></div>
<div class="t" style="left:322.40px;top:128px;font-size:12px;">nfs.conf</div>
<div class="t" style="left:637.60px;top:128px;font-size:12px;">2</div>
<div class="t" style="left:656.50px;top:128px;font-size:12px;transform:scaleX(0.9750);transform-origin:0 0;">Regular File</div>
<div class="t" style="left:756.00px;top:128px;font-size:12px;transform:scaleX(0.9500);transform-origin:0 0;">28/07/2021 19:27:28</div>
<div class="t" style="left:322.40px;top:147px;font-size:12px;">nfsmount.conf</div>
<div class="t" style="left:637.60px;top:147px;font-size:12px;">4</div>
<div class="t" style="left:656.50px;top:147px;font-size:12px;transform:scaleX(0.9750);transform-origin:0 0;">Regular File</div>
<div class="t" style="left:756.00px;top:147px;font-size:12px;transform:scaleX(0.9500);transform-origin:0 0;">28/07/2021 19:27:28</div>
<div class="t" style="left:322.40px;top:166px;font-size:12px;">nsswitch.conf</div>
<div class="t" style="left:637.60px;top:166px;font-size:12px;">1</div>
<div class="t" style="left:656.50px;top:166px;font-size:12px;transform:scaleX(0.9750);transform-origin:0 0;">Symbolic Link</div>
<div class="t" style="left:756.00px;top:166px;font-size:12px;transform:scaleX(0.9500);transform-origin:0 0;">23/08/2021 13:16:31</div>
<div class="t" style="left:322.40px;top:185px;font-size:12px;">nsswitch.conf.bak</div>
<div class="t" style="left:637.60px;top:185px;font-size:12px;">3</div>
<div class="t" style="left:656.50px;top:185px;font-size:12px;transform:scaleX(0.9750);transform-origin:0 0;">Regular File</div>
<div class="t" style="left:756.00px;top:185px;font-size:12px;transform:scaleX(0.9500);transform-origin:0 0;">05/03/2021 16:47:14</div>
<div class="t" style="left:322.40px;top:204px;font-size:12px;">oddjobd.conf</div>
<div class="t" style="left:637.60px;top:204px;font-size:12px;">5</div>
<div class="t" style="left:656.50px;top:204px;font-size:12px;transform:scaleX(0.9750);transform-origin:0 0;">Regular File</div>
<div class="t" style="left:756.00px;top:204px;font-size:12px;transform:scaleX(0.9500);transform-origin:0 0;">15/12/2020 7:18:21</div>
<div class="t" style="left:322.40px;top:223px;font-size:12px;">os-release</div>
<div class="t" style="left:637.60px;top:223px;font-size:12px;">1</div>
<div class="t" style="left:656.50px;top:223px;font-size:12px;transform:scaleX(0.9750);transform-origin:0 0;">Symbolic Link</div>
<div class="t" style="left:756.00px;top:223px;font-size:12px;transform:scaleX(0.9500);transform-origin:0 0;">31/03/2021 8:28:12</div>
<div class="t" style="left:322.40px;top:242px;font-size:12px;">papersize</div>
<div class="t" style="left:637.60px;top:242px;font-size:12px;">1</div>
<div class="t" style="left:656.50px;top:242px;font-size:12px;transform:scaleX(0.9750);transform-origin:0 0;">Regular File</div>
<div class="t" style="left:756.00px;top:242px;font-size:12px;transform:scaleX(0.9500);transform-origin:0 0;">04/12/2018 12:01:43</div>
<div class="t" style="left:322.40px;top:261px;font-size:12px;">passwd</div>
<div class="t" style="left:637.60px;top:261px;font-size:12px;">3</div>
<div class="t" style="left:656.50px;top:261px;font-size:12px;transform:scaleX(0.9750);transform-origin:0 0;">Regular File</div>
<div class="t" style="left:756.00px;top:261px;font-size:12px;transform:scaleX(0.9500);transform-origin:0 0;">24/08/2021 12:28:46</div>
<div class="t" style="left:322.40px;top:280px;font-size:12px;">passwd-</div>
<div class="t" style="left:637.60px;top:280px;font-size:12px;">3</div>
<div class="t" style="left:656.50px;top:280px;font-size:12px;transform:scaleX(0.9750);transform-origin:0 0;">Regular File</div>
<div class="t" style="left:756.00px;top:280px;font-size:12px;transform:scaleX(0.9500);transform-origin:0 0;">24/08/2021 12:28:44</div>
<div class="t" style="left:322.40px;top:299px;font-size:12px;">pbm2ppa.conf</div>
<div class="t" style="left:637.60px;top:299px;font-size:12px;">2</div>
<div class="t" style="left:656.50px;top:299px;font-size:12px;transform:scaleX(0.9750);transform-origin:0 0;">Regular File</div>
<div class="t" style="left:756.00px;top:299px;font-size:12px;transform:scaleX(0.9500);transform-origin:0 0;">12/08/2018 17:22:06</div>
<div class="t" style="left:322.40px;top:318px;font-size:12px;">pinforc</div>
<div class="t" style="left:637.60px;top:318px;font-size:12px;">3</div>
<div class="t" style="left:656.50px;top:318px;font-size:12px;transform:scaleX(0.9750);transform-origin:0 0;">Regular File</div>
<div class="t" style="left:756.00px;top:318px;font-size:12px;transform:scaleX(0.9500);transform-origin:0 0;">12/08/2018 17:19:38</div>
<div class="t" style="left:322.40px;top:337px;font-size:12px;">pnm2ppa.conf</div>
<div class="t" style="left:637.60px;top:337px;font-size:12px;">7</div>
<div class="t" style="left:656.50px;top:337px;font-size:12px;transform:scaleX(0.9750);transform-origin:0 0;">Regular File</div>
<div class="t" style="left:756.00px;top:337px;font-size:12px;transform:scaleX(0.9500);transform-origin:0 0;">12/08/2018 17:22:08</div>
<div class="t" style="left:322.40px;top:356px;font-size:12px;">printcap</div>
<div class="t" style="left:637.60px;top:356px;font-size:12px;">1</div>
<div class="t" style="left:656.50px;top:356px;font-size:12px;transform:scaleX(0.9750);transform-origin:0 0;">Regular File</div>
<div class="t" style="left:756.00px;top:356px;font-size:12px;transform:scaleX(0.9500);transform-origin:0 0;">10/09/2018 11:51:03</div>
<svg style="left:0;top:0" width="330" height="380" viewBox="0 0 330 380"><defs><pattern id="dg" x="304" y="258" width="2" height="2" patternUnits="userSpaceOnUse"><rect width="1" height="1" fill="#1a73e8"/></pattern></defs><path d="M306.5 125.5 L315 125.5 L317.5 128 L317.5 140.5 L306.5 140.5Z" fill="#f7f9fb" stroke="#7d7d7d" stroke-width="1"/><path d="M315 125.5 L315 128 L317.5 128" fill="#fff" stroke="#9a9a9a" stroke-width="0.8"/><path d="M306.5 144.5 L315 144.5 L317.5 147 L317.5 159.5 L306.5 159.5Z" fill="#f7f9fb" stroke="#7d7d7d" stroke-width="1"/><path d="M315 144.5 L315 147 L317.5 147" fill="#fff" stroke="#9a9a9a" stroke-width="0.8"/><path d="M306.5 163.5 L315 163.5 L317.5 166 L317.5 178.5 L306.5 178.5Z" fill="#f7f9fb" stroke="#7d7d7d" stroke-width="1"/><path d="M315 163.5 L315 166 L317.5 166" fill="#fff" stroke="#9a9a9a" stroke-width="0.8"/><path d="M306.5 182.5 L315 182.5 L317.5 185 L317.5 197.5 L306.5 197.5Z" fill="#f7f9fb" stroke="#7d7d7d" stroke-width="1"/><path d="M315 182.5 L315 185 L317.5 185" fill="#fff" stroke="#9a9a9a" stroke-width="0.8"/><path d="M306.5 201.5 L315 201.5 L317.5 204 L317.5 216.5 L306.5 216.5Z" fill="#f7f9fb" stroke="#7d7d7d" stroke-width="1"/><path d="M315 201.5 L315 204 L317.5 204" fill="#fff" stroke="#9a9a9a" stroke-width="0.8"/><path d="M306.5 220.5 L315 220.5 L317.5 223 L317.5 235.5 L306.5 235.5Z" fill="#f7f9fb" stroke="#7d7d7d" stroke-width="1"/><path d="M315 220.5 L315 223 L317.5 223" fill="#fff" stroke="#9a9a9a" stroke-width="0.8"/><path d="M306.5 239.5 L315 239.5 L317.5 242 L317.5 254.5 L306.5 254.5Z" fill="#f7f9fb" stroke="#7d7d7d" stroke-width="1"/><path d="M315 239.5 L315 242 L317.5 242" fill="#fff" stroke="#9a9a9a" stroke-width="0.8"/><path d="M306.5 258.5 L315 258.5 L317.5 261 L317.5 273.5 L306.5 273.5Z" fill="#f7f9fb" stroke="#7d7d7d" stroke-width="1"/><rect x="304" y="258" width="16" height="16" fill="url(#dg)"/><path d="M306.5 277.5 L315 277.5 L317.5 280 L317.5 292.5 L306.5 292.5Z" fill="#f7f9fb" stroke="#7d7d7d" stroke-width="1"/><path d="M315 277.5 L315 280 L317.5 280" fill="#fff" stroke="#9a9a9a" stroke-width="0.8"/><path d="M306.5 296.5 L315 296.5 L317.5 299 L317.5 311.5 L306.5 311.5Z" fill="#f7f9fb" stroke="#7d7d7d" stroke-width="1"/><path d="M315 296.5 L315 299 L317.5 299" fill="#fff" stroke="#9a9a9a" stroke-width="0.8"/><path d="M306.5 315.5 L315 315.5 L317.5 318 L317.5 330.5 L306.5 330.5Z" fill="#f7f9fb" stroke="#7d7d7d" stroke-width="1"/><path d="M315 315.5 L315 318 L317.5 318" fill="#fff" stroke="#9a9a9a" stroke-width="0.8"/><path d="M306.5 334.5 L315 334.5 L317.5 337 L317.5 349.5 L306.5 349.5Z" fill="#f7f9fb" stroke="#7d7d7d" stroke-width="1"/><path d="M315 334.5 L315 337 L317.5 337" fill="#fff" stroke="#9a9a9a" stroke-width="0.8"/><path d="M306.5 353.5 L315 353.5 L317.5 356 L317.5 368.5 L306.5 368.5Z" fill="#f7f9fb" stroke="#7d7d7d" stroke-width="1"/><path d="M315 353.5 L315 356 L317.5 356" fill="#fff" stroke="#9a9a9a" stroke-width="0.8"/></svg>
<div class="a" style="left:299px;top:374px;width:1154px;height:552px;background:#f8f8f8"></div>
<div class="a" style="left:300px;top:375px;width:1153px;height:550px;background:#8a8a8a"></div>
<div class="a" style="left:301px;top:376px;width:1152px;height:549px;background:#6a6a6a"></div>
<div class="a" style="left:302px;top:377px;width:1151px;height:548px;background:#fff"></div>
<div class="a" style="left:302px;top:377px;width:1151px;height:1px;background:#a0a0a0"></div>
<div class="a" style="left:302px;top:924px;width:1151px;height:1px;background:#e3e3e3"></div>
<div class="a" style="left:304px;top:378px;width:1149px;height:544px;background:#8a8a8a"></div>
<div class="a" style="left:305px;top:378px;width:1148px;height:544px;background:#6a6a6a"></div>
<div class="a" style="left:306px;top:379px;width:1147px;height:543px;background:#fff"></div>
<div class="a" style="left:306px;top:922px;width:1147px;height:1px;background:#e3e3e3"></div>
<pre class="a" style="left:316px;top:395.45px;font-family:'Liberation Mono', monospace;font-size:13.333px;line-height:16px;color:#000">root:x:0:0:root:/root:/bin/bash
bin:x:1:1:bin:/bin:/sbin/nologin
daemon:x:2:2:daemon:/sbin:/sbin/nologin
adm:x:3:4:adm:/var/adm:/sbin/nologin
lp:x:4:7:lp:/var/spool/lpd:/sbin/nologin
sync:x:5:0:sync:/sbin:/bin/sync
shutdown:x:6:0:shutdown:/sbin:/sbin/shutdown
halt:x:7:0:halt:/sbin:/sbin/halt
mail:x:8:12:mail:/var/spool/mail:/sbin/nologin
operator:x:11:0:operator:/root:/sbin/nologin
games:x:12:100:games:/usr/games:/sbin/nologin
ftp:x:14:50:FTP User:/var/ftp:/sbin/nologin
nobody:x:65534:65534:Kernel Overflow User:/:/sbin/nologin
dbus:x:81:81:System message bus:/:/sbin/nologin
systemd-coredump:x:999:997:systemd Core Dumper:/:/sbin/nologin
systemd-resolve:x:193:193:systemd Resolver:/:/sbin/nologin
tss:x:59:59:Account used for TPM access:/dev/null:/sbin/nologin
geoclue:x:998:996:User for geoclue:/var/lib/geoclue:/sbin/nologin
libstoragemgmt:x:997:993:daemon account for libstoragemgmt:/var/run/lsm:/sbin/nologin
qemu:x:107:107:qemu user:/:/sbin/nologin
clevis:x:996:992:Clevis Decryption Framework unprivileged user:/var/cache/clevis:/sbin/nologin
usbmuxd:x:113:113:usbmuxd user:/:/sbin/nologin
unbound:x:995:991:Unbound DNS resolver:/etc/unbound:/sbin/nologin
gluster:x:994:990:GlusterFS daemons:/run/gluster:/sbin/nologin
rpc:x:32:32:Rpcbind Daemon:/var/lib/rpcbind:/sbin/nologin
avahi:x:70:70:Avahi mDNS/DNS-SD Stack:/var/run/avahi-daemon:/sbin/nologin
polkitd:x:993:989:User for polkitd:/:/sbin/nologin
rtkit:x:172:172:RealtimeKit:/proc:/sbin/nologin
pipewire:x:992:988:PipeWire System Daemon:/var/run/pipewire:/sbin/nologin
radvd:x:75:75:radvd user:/:/sbin/nologin
dnsmasq:x:987:987:Dnsmasq DHCP and DNS server:/var/lib/dnsmasq:/sbin/nologin
saslauth:x:986:76:Saslauthd user:/run/saslauthd:/sbin/nologin
cockpit-ws:x:985:985:User for cockpit web service:/nonexisting:/sbin/nologin</pre>
<div class="a" style="left:0px;top:945px;width:48px;height:3px;background:#cfe3ec"></div>
<div class="a" style="left:48px;top:945px;width:344px;height:3px;background:#fff;border-top:1px solid #c8c8c8;border-left:1px solid #c8c8c8"></div>
<div class="a" style="left:392px;top:945px;width:246px;height:3px;background:#cfe3ec"></div>
<div class="a" style="left:638px;top:945px;width:48px;height:3px;background:#e6eff3"></div>
<div class="a" style="left:686px;top:945px;width:767px;height:3px;background:#d3e5ec"></div></body></html>
